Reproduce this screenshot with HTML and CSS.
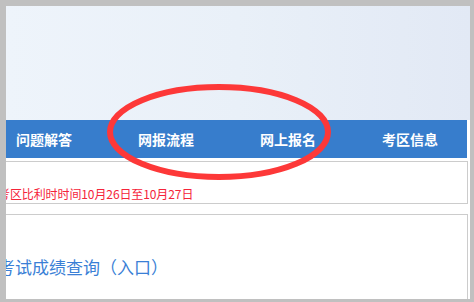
FILE: index.html
```html
<!DOCTYPE html>
<html lang="zh">
<head>
<meta charset="utf-8">
<link rel="stylesheet" href="styles.css">
</head>
<body>
<div class="frame">
  <div class="banner"></div>
  <nav class="nav">
    <ul class="nav-list">
      <li class="nav-item">问题解答</li>
      <li class="nav-item">网报流程</li>
      <li class="nav-item">网上报名</li>
      <li class="nav-item">考区信息</li>
    </ul>
  </nav>
  <div class="content">
    <div class="box notice">
      <p class="notice-text">考区比利时时间10月26日至10月27日</p>
    </div>
    <div class="box links">
      <p class="link">考试成绩查询（入口）</p>
      <p class="link link-faint">准考证打印（入口）</p>
    </div>
  </div>
  <svg class="mark" width="240" height="110" viewBox="0 0 240 110" aria-hidden="true">
    <ellipse cx="113" cy="49" rx="109" ry="45" fill="none" stroke="#fd3838" stroke-width="6"/>
  </svg>
</div>
</body>
</html>
```
FILE: styles.css
```css
html, body {
  margin: 0;
  padding: 0;
}
body {
  background: #c0c0c0;
  font-family: "Noto Sans CJK SC", "Noto Sans", sans-serif;
}
.frame {
  position: relative;
  margin: 6px 4px 0 6px;
  height: 293px;
  overflow: hidden;
  background: #fff;
}
.banner {
  height: 114px;
  background: linear-gradient(to right, #eef4fb, #e9f0f8 50%, #e2e9f5);
}
.nav {
  height: 38px;
  margin-right: 3px;
  background: #377dcc;
  display: flex;
  align-items: center;
}
.nav-list {
  list-style: none;
  margin: 0 0 0 -23px;
  padding: 0;
  display: flex;
}
.nav-item {
  width: 122px;
  text-align: center;
  color: #fff;
  font-weight: bold;
  font-size: 14px;
  line-height: 20px;
}
.content {
  margin: 3px 2px 0 -20px;
  display: flex;
  flex-direction: column;
  gap: 10px;
}
.box {
  border: 1px solid #cccccc;
  background: #fff;
}
.notice {
  padding: 24px 0 1px 11px;
}
.notice-text {
  margin: 0;
  color: #f5243a;
  font-size: 12px;
  line-height: 16px;
  letter-spacing: -0.1px;
}
.links {
  padding: 41px 0 0 11px;
  height: 120px;
}
.link {
  margin: 0 0 21px;
  color: #3a7fd6;
  font-size: 17px;
  line-height: 22px;
}
.link-faint {
  color: #b4cdee;
}
.mark {
  position: absolute;
  left: 100px;
  top: 77px;
}
```
